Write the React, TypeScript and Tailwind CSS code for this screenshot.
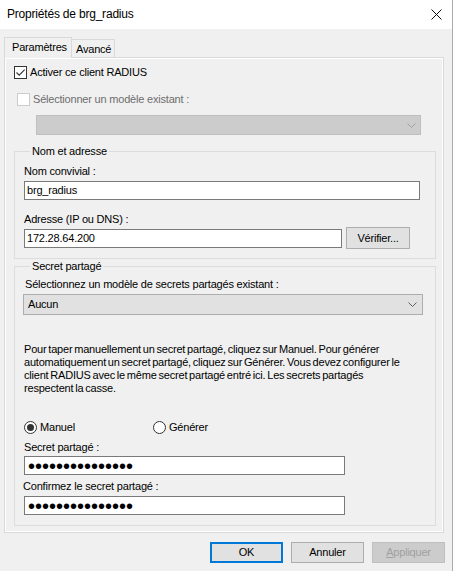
function Check({ checked, disabled }: { checked?: boolean; disabled?: boolean }) {
  return (
    <span
      className={
        disabled
          ? "w-[13px] h-[13px] shrink-0 border border-[#cccccc] bg-white"
          : "w-[13px] h-[13px] shrink-0 border border-[#333333] bg-white flex items-center justify-center"
      }
    >
      {checked && (
        <svg width="11" height="11" viewBox="0 0 11 11">
          <path d="M1.5 5.5 L4.2 8.2 L9.7 2.7" stroke="#333333" strokeWidth="1.1" fill="none" />
        </svg>
      )}
    </span>
  )
}

function Radio({ checked }: { checked?: boolean }) {
  return (
    <span className="w-[13px] h-[13px] shrink-0 rounded-full border border-[#333333] bg-white flex items-center justify-center">
      {checked && <span className="w-[7px] h-[7px] rounded-full bg-[#333333]" />}
    </span>
  )
}

function Chevron({ color }: { color: string }) {
  return (
    <svg width="9" height="5" viewBox="0 0 9 5">
      <path d="M0.5 0.5 L4.5 4.5 L8.5 0.5" stroke={color} fill="none" />
    </svg>
  )
}

function Dots() {
  return (
    <span className="text-[20px] leading-[12px] tracking-[0px] text-black">
      •••••••••••••••
    </span>
  )
}

export default function App() {
  return (
    <div className="w-[453px] h-[571px] border-r border-[#aaaaaa] bg-[#f0f0f0] font-['Liberation_Sans',Arial,sans-serif] text-[11px] leading-[13px] tracking-[-0.2px] text-black flex flex-col">
      {/* title bar */}
      <div className="h-[29px] bg-white flex items-center justify-between pl-[7px] pr-[10px] shrink-0">
        <span className="text-[12px]">Propriétés de brg_radius</span>
        <svg width="11" height="11" viewBox="0 0 11 11">
          <path d="M0.5 0.5 L10.5 10.5 M10.5 0.5 L0.5 10.5" stroke="#111111" strokeWidth="1" />
        </svg>
      </div>

      {/* tabs */}
      <div className="mt-[8px] ml-[4px] flex items-end h-[20px]">
        <div className="relative z-10 -mb-px h-[21px] w-[68px] border border-b-0 border-[#d9d9d9] bg-[#f0f0f0] pl-[7px] pt-[3px]">
          Paramètres
        </div>
        <div className="h-[18px] w-[43px] border border-l-0 border-b-0 border-[#d9d9d9] bg-[#f0f0f0] pl-[4px] pt-[3px]">
          Avancé
        </div>
      </div>

      {/* tab page */}
      <div className="ml-[4px] w-[440px] h-[476px] border border-[#d9d9d9] shadow-[inset_0_0_0_1px_#ffffff] flex flex-col">
        <label className="mt-[8px] ml-[9px] flex items-center gap-[3px]">
          <Check checked />
          <span>Activer ce client RADIUS</span>
        </label>
        <label className="mt-[14px] ml-[12px] flex items-center gap-[3px] text-[#6d6d6d]">
          <Check disabled />
          <span>Sélectionner un modèle existant :</span>
        </label>
        <div className="mt-[9px] ml-[31px] w-[385px] h-[20px] bg-[#cccccc] border border-[#bfbfbf] flex items-center justify-end pr-[4px]">
          <Chevron color="#a0a0a0" />
        </div>

        <fieldset className="mt-[10px] ml-[9px] w-[422px] border border-[#dcdcdc] pl-[9px] pb-[9px]">
          <legend className="ml-[6px] px-[2px]">Nom et adresse</legend>
          <div className="mt-[7px]">Nom convivial :</div>
          <div className="mt-[3px] w-[396px] h-[19px] bg-white border border-[#7a7a7a] pl-[2px] flex items-center">
            brg_radius
          </div>
          <div className="mt-[13px]">Adresse (IP ou DNS) :</div>
          <div className="mt-[1px] flex items-center gap-[4px]">
            <div className="w-[318px] h-[19px] bg-white border border-[#7a7a7a] pl-[2px] flex items-center">
              172.28.64.200
            </div>
            <button className="w-[64px] h-[22px] bg-[#e1e1e1] border border-[#adadad] flex items-center justify-center">
              Vérifier...
            </button>
          </div>
        </fieldset>

        <fieldset className="mt-[1px] ml-[9px] w-[422px] border border-[#dcdcdc] pl-[9px] pb-[10px]">
          <legend className="ml-[6px] px-[2px]">Secret partagé</legend>
          <div className="mt-[5px] ml-px">Sélectionnez un modèle de secrets partagés existant :</div>
          <div className="mt-[3px] -ml-px w-[400px] h-[21px] bg-[#e1e1e1] border border-[#adadad] flex items-center justify-between pl-[4px] pr-[5px]">
            <span>Aucun</span>
            <Chevron color="#606060" />
          </div>
          <p className="mt-[28px] whitespace-nowrap [word-spacing:-1px]">
            Pour taper manuellement un secret partagé, cliquez sur Manuel. Pour générer
            <br />
            automatiquement un secret partagé, cliquez sur Générer. Vous devez configurer le
            <br />
            client RADIUS avec le même secret partagé entré ici. Les secrets partagés
            <br />
            respectent la casse.
          </p>
          <div className="mt-[26px] flex items-center">
            <label className="w-[129px] flex items-center gap-[3px]">
              <Radio checked />
              <span>Manuel</span>
            </label>
            <label className="flex items-center gap-[3px]">
              <Radio />
              <span>Générer</span>
            </label>
          </div>
          <div className="mt-[7px]">Secret partagé :</div>
          <div className="mt-[2px] w-[321px] h-[19px] bg-white border border-[#7a7a7a] pl-[3px] flex items-center">
            <Dots />
          </div>
          <div className="mt-[5px] -ml-px">Confirmez le secret partagé :</div>
          <div className="mt-[3px] w-[321px] h-[19px] bg-white border border-[#7a7a7a] pl-[3px] flex items-center">
            <Dots />
          </div>
        </fieldset>
      </div>

      {/* buttons */}
      <div className="mt-[9px] flex justify-end gap-[8px] pr-[7px]">
        <button className="w-[73px] h-[21px] bg-[#e1e1e1] border-2 border-[#0078d7] flex items-center justify-center">
          OK
        </button>
        <button className="w-[73px] h-[21px] bg-[#e1e1e1] border border-[#adadad] flex items-center justify-center">
          Annuler
        </button>
        <button className="w-[73px] h-[21px] bg-[#cccccc] border border-[#bfbfbf] text-[#a0a0a0] flex items-center justify-center">
          <span>
            <span className="underline">A</span>ppliquer
          </span>
        </button>
      </div>
    </div>
  )
}
